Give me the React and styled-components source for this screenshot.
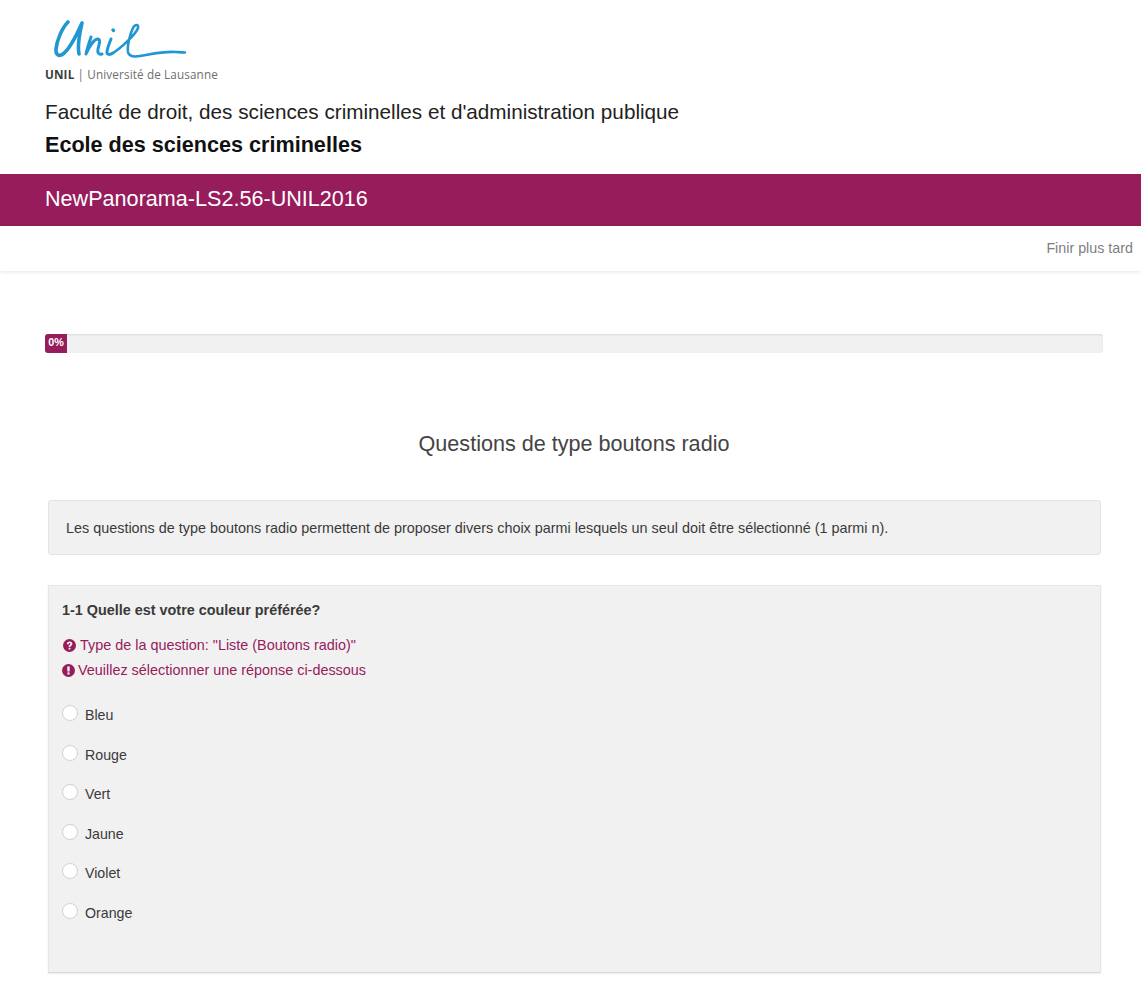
import React from "react";
import styled, { createGlobalStyle } from "styled-components";

const Global = createGlobalStyle`
  html, body { margin: 0; padding: 0; background: #fff; }
  body { font-family: "Liberation Sans", Arial, sans-serif; font-size: 14px; color: #333; overflow: hidden; }
`;

const Page = styled.div`
  width: 1141px;
  height: 992px;
  overflow: hidden;
`;

const Header = styled.header`
  padding: 20px 0 0 45px;
  height: 174px;
  box-sizing: border-box;
  display: flex;
  flex-direction: column;
`;

const LogoBox = styled.div`
  width: 175px;
  height: 62px;
  display: flex;
  flex-direction: column;
`;

const LogoMark = styled.svg`
  display: block;
  width: 175px;
  height: 46px;
  flex: none;
`;

const LogoText = styled.div`
  font-family: "Open Sans", sans-serif;
  font-size: 11.7px;
  line-height: 14px;
  margin-top: 1px;
  color: #6e6e6e;
  white-space: nowrap;
  letter-spacing: 0.14px;
  & b { color: #3c3c3c; font-weight: 700; }
`;

const Faculty = styled.div`
  font-size: 20.7px;
  line-height: 24px;
  color: #222;
  margin-top: 18px;
`;

const School = styled.div`
  font-size: 21.6px;
  line-height: 24px;
  font-weight: 700;
  color: #111;
  margin-top: 9px;
`;

const Banner = styled.div`
  height: 52px;
  background: #961c5b;
  color: #fff;
  font-size: 21.6px;
  line-height: 50px;
  padding-left: 45px;
`;

const Nav = styled.nav`
  height: 45px;
  display: flex;
  justify-content: flex-end;
  align-items: center;
  padding-right: 8px;
  box-shadow: 0 1px 4px rgba(0, 0, 0, 0.1);
`;

const NavLink = styled.a`
  font-size: 14.3px;
  color: #808080;
  position: relative;
  top: -1px;
`;

const Progress = styled.div`
  margin: 63px 38px 0 45px;
  height: 19px;
  box-sizing: border-box;
  background: #f1f1f1;
  border-radius: 3px;
  box-shadow: inset 0 1px 2px rgba(0, 0, 0, 0.1);
`;

const ProgressBar = styled.div`
  height: 19px;
  background: #961c5b;
  border-radius: 3px 0 0 3px;
  color: #fff;
  font-size: 10.8px;
  font-weight: 700;
  line-height: 17px;
  text-align: center;
`;

const GroupTitle = styled.h1`
  margin: 76px 0 0;
  padding-left: 7px;
  font-size: 21.6px;
  font-weight: 400;
  line-height: 30px;
  text-align: center;
  color: #444;
`;

const Intro = styled.div`
  margin: 41px 40px 0 48px;
  height: 55px;
  box-sizing: border-box;
  background: #f1f1f1;
  border: 1px solid #e3e3e3;
  border-radius: 3px;
  padding: 0 17px;
  display: flex;
  align-items: center;
  font-size: 14.4px;
  color: #3a3a3a;
`;

const Question = styled.section`
  margin: 30px 40px 0 48px;
  height: 388px;
  box-sizing: border-box;
  background: #f1f1f1;
  border: 1px solid #e6e6e6;
  border-bottom-color: #d8d8d8;
  box-shadow: 0 1px 2px rgba(0, 0, 0, 0.08);
  padding: 14px 13px 0;
`;

const QuestionText = styled.div`
  font-size: 14.4px;
  font-weight: 700;
  line-height: 20px;
  color: #3a3a3a;
`;

const Help = styled.div`
  color: #961c5b;
  font-size: 14.4px;
  line-height: 20px;
  display: flex;
  align-items: center;
  gap: ${(p) => p.$gap}px;
  margin-top: ${(p) => p.$top}px;
  padding-left: ${(p) => p.$pad}px;
`;

const HelpIcon = styled.svg`
  width: 13px;
  height: 13px;
  flex: none;
`;

const Options = styled.div`
  margin-top: 24px;
  display: flex;
  flex-direction: column;
`;

const Option = styled.label`
  height: 39.6px;
  display: flex;
  align-items: flex-start;
  gap: 7px;
  font-size: 14.2px;
  color: #3a3a3a;
`;

const Radio = styled.span`
  width: 14px;
  height: 14px;
  border: 1px solid #d2d2d2;
  border-radius: 50%;
  background: #fff;
  flex: none;
  margin-top: 1px;
`;

const OptionLabel = styled.span`
  line-height: 20px;
  margin-top: 1px;
`;

const QuestionIcon = () => (
  <HelpIcon viewBox="0 0 24 24">
    <circle cx="12" cy="12" r="12" fill="#961c5b" />
    <path d="M7 9.500c0-3 2.200-5 5.300-5 3 0 5 1.800 5 4.200 0 2-1.100 2.900-2.300 3.700-1 .7-1.300 1.100-1.300 2.300h-3.300c0-2.200.7-3.200 2-4.100.9-.6 1.400-1 1.400-1.800 0-.8-.7-1.400-1.500-1.400-.9 0-1.600.7-1.700 2.100z" fill="#f1f1f1" />
    <rect x="10.400" y="16.200" width="3.300" height="3.200" fill="#f1f1f1" />
  </HelpIcon>
);

const Exclamation = () => (
  <HelpIcon viewBox="0 0 24 24">
    <circle cx="12" cy="12" r="12" fill="#961c5b" />
    <path d="M9.500 4.500h5l-.5 9.500h-4z" fill="#f1f1f1" />
    <rect x="10" y="15.500" width="4" height="4" fill="#f1f1f1" />
  </HelpIcon>
);

const options = ["Bleu", "Rouge", "Vert", "Jaune", "Violet", "Orange"];

export default function App() {
  return (
    <Page>
      <Global />
      <Header>
        <LogoBox>
          <LogoMark viewBox="0 0 175 46" fill="none" stroke="#2097d2" strokeLinecap="round" strokeLinejoin="round">
            <path d="M23 2C17 8 12 20 11 29c-.5 6 3 8 7 5C26 28 33 12 37 3C35 12 32 24 34 34" strokeWidth="3.600" />
            <path d="M46 17c-2 6-4 12-5 17 3-7 8-15 12-15 3 0 1 6 0 10-1 4 1 6 4 5" strokeWidth="3" />
            <path d="M66 19c-2 5-4 10-4 13 0 3 3 3 6 1" strokeWidth="3" />
            <path d="M68 10l.5 .5" strokeWidth="3.400" />
            <path d="M68 33C76 28 91 14 93 8c1-4-3-4-5 0-3 6-6 18-5 24 1 5 6 5 12 4 12-2 24-5 36-4 4 .3 6 .5 9 .5" strokeWidth="2.600" />
          </LogoMark>
          <LogoText><b>UNIL</b> | Université de Lausanne</LogoText>
        </LogoBox>
        <Faculty>Faculté de droit, des sciences criminelles et d'administration publique</Faculty>
        <School>Ecole des sciences criminelles</School>
      </Header>
      <Banner>NewPanorama-LS2.56-UNIL2016</Banner>
      <Nav><NavLink>Finir plus tard</NavLink></Nav>
      <Progress><ProgressBar style={{ width: 22 }}>0%</ProgressBar></Progress>
      <GroupTitle>Questions de type boutons radio</GroupTitle>
      <Intro>Les questions de type boutons radio permettent de proposer divers choix parmi lesquels un seul doit être sélectionné (1 parmi n).</Intro>
      <Question>
        <QuestionText>1-1 Quelle est votre couleur préférée?</QuestionText>
        <Help $top={15} $gap={4} $pad={1}><QuestionIcon />Type de la question: "Liste (Boutons radio)"</Help>
        <Help $top={5} $gap={3} $pad={0}><Exclamation />Veuillez sélectionner une réponse ci-dessous</Help>
        <Options>
          {options.map((o) => (
            <Option key={o}><Radio /><OptionLabel>{o}</OptionLabel></Option>
          ))}
        </Options>
      </Question>
    </Page>
  );
}
